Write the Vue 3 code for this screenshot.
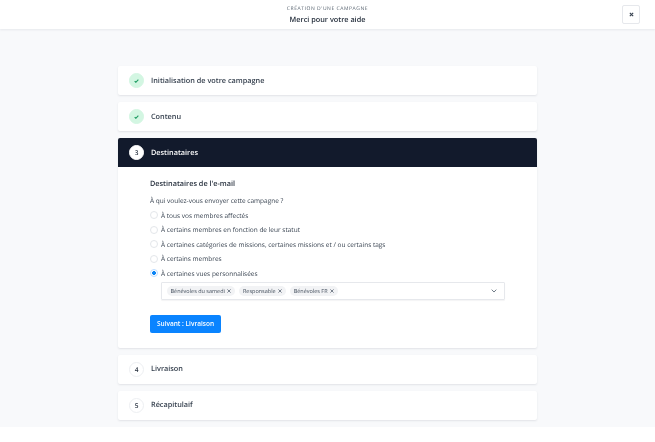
<script setup>
const options = [
  { label: 'À tous vos membres affectés', checked: false },
  { label: 'À certains membres en fonction de leur statut', checked: false },
  { label: 'À certaines catégories de missions, certaines missions et / ou certains tags', checked: false },
  { label: 'À certains membres', checked: false },
  { label: 'À certaines vues personnalisées', checked: true }
]

const tags = ['Bénévoles du samedi', 'Responsable', 'Bénévoles FR']
</script>

<template>
  <div class="page">
    <header class="topbar">
      <div class="topbar-sub">CRÉATION D'UNE CAMPAGNE</div>
      <div class="topbar-title">Merci pour votre aide</div>
      <button class="close-btn">
        <svg width="5" height="5" viewBox="0 0 6 6">
          <path d="M1 1l4 4M5 1L1 5" stroke="#3a4553" stroke-width="1.4" fill="none" />
        </svg>
      </button>
    </header>

    <main class="steps">
      <section class="card">
        <div class="card-head">
          <span class="bullet done">
            <svg width="5" height="4" viewBox="0 0 6 5">
              <path d="M0.7 2.6l1.5 1.5L5.3 0.9" stroke="#1f9d63" stroke-width="1.4" fill="none" />
            </svg>
          </span>
          <span class="card-title">Initialisation de votre campagne</span>
        </div>
      </section>

      <section class="card">
        <div class="card-head">
          <span class="bullet done">
            <svg width="5" height="4" viewBox="0 0 6 5">
              <path d="M0.7 2.6l1.5 1.5L5.3 0.9" stroke="#1f9d63" stroke-width="1.4" fill="none" />
            </svg>
          </span>
          <span class="card-title">Contenu</span>
        </div>
      </section>

      <section class="card">
        <div class="card-head active">
          <span class="bullet current">3</span>
          <span class="card-title">Destinataires</span>
        </div>
        <div class="card-body">
          <h2 class="body-title">Destinataires de l'e-mail</h2>
          <p class="question">À qui voulez-vous envoyer cette campagne ?</p>
          <div v-for="opt in options" :key="opt.label" class="radio-row">
            <span class="radio" :class="{ checked: opt.checked }"></span>
            <span>{{ opt.label }}</span>
          </div>
          <div class="select">
            <span v-for="tag in tags" :key="tag" class="tag">
              {{ tag }}
              <svg width="4" height="4" viewBox="0 0 5 5">
                <path d="M0.5 0.5l4 4M4.5 0.5l-4 4" stroke="#5a6573" stroke-width="1" fill="none" />
              </svg>
            </span>
            <svg class="chevron" width="6" height="4" viewBox="0 0 7 5">
              <path d="M0.6 0.8L3.5 3.8L6.4 0.8" stroke="#6b7683" stroke-width="1.2" fill="none" />
            </svg>
          </div>
          <button class="next-btn">Suivant : Livraison</button>
        </div>
      </section>

      <section class="card">
        <div class="card-head">
          <span class="bullet">4</span>
          <span class="card-title">Livraison</span>
        </div>
      </section>

      <section class="card">
        <div class="card-head">
          <span class="bullet">5</span>
          <span class="card-title">Récapitulaif</span>
        </div>
      </section>
    </main>
  </div>
</template>

<style>
html,
body {
  background: #fff;
}
</style>

<style scoped>
.page {
  font-family: "Open Sans", sans-serif;
  text-rendering: geometricPrecision;
  color: #333e4c;
  background: #f8f9fb;
  height: 427px;
  overflow: hidden;
  filter: blur(0.3px);
}

.topbar {
  position: relative;
  height: 29px;
  background: #fff;
  box-shadow: 0 1px 2px rgba(30, 40, 60, 0.08);
  text-align: center;
}

.topbar-sub {
  padding-top: 6px;
  font-size: 5px;
  line-height: 7px;
  letter-spacing: 0.55px;
  color: #505c69;
}

.topbar-title {
  margin-top: 1.5px;
  font-size: 7.3px;
  line-height: 11px;
  font-weight: 600;
  color: #1f2937;
}

.close-btn {
  position: absolute;
  top: 5px;
  right: 15px;
  width: 18px;
  height: 19px;
  padding: 0;
  display: flex;
  align-items: center;
  justify-content: center;
  background: #fff;
  border: 1px solid #e6e8ec;
  border-radius: 2px;
}

.steps {
  width: 419px;
  margin: 0 auto;
  padding-top: 37px;
  display: flex;
  flex-direction: column;
  gap: 7px;
}

.card {
  background: #fff;
  border-radius: 2px;
  box-shadow: 0 1px 2px rgba(30, 40, 60, 0.1);
}

.card-head {
  height: 29px;
  padding: 0 11px;
  display: flex;
  align-items: center;
  gap: 7px;
  border-radius: 2px;
}

.card-head.active {
  background: #121a2c;
  color: #fff;
  border-radius: 2px 2px 0 0;
}

.card-title {
  font-size: 7.3px;
  font-weight: 600;
}

.bullet {
  width: 15px;
  height: 15px;
  flex: none;
  display: flex;
  align-items: center;
  justify-content: center;
  border: 1px solid #edeff2;
  border-radius: 50%;
  box-sizing: border-box;
  font-size: 6.5px;
  font-weight: 600;
  color: #2b3543;
}

.bullet.done {
  background: #d3f6e2;
  border-color: #d3f6e2;
}

.bullet.current {
  background: #fff;
  border-color: #fff;
}

.card-body {
  padding: 12px 32px 15px;
}

.body-title {
  margin: 0;
  font-size: 7.3px;
  line-height: 11px;
  font-weight: 600;
  color: #1f2937;
}

.question {
  margin: 5px 0 0;
  font-size: 6.5px;
  line-height: 12px;
}

.radio-row {
  height: 14.5px;
  display: flex;
  align-items: center;
  gap: 3px;
  font-size: 6.5px;
}

.question + .radio-row {
  margin-top: 1px;
}

.radio {
  width: 8px;
  height: 8px;
  flex: none;
  box-sizing: border-box;
  border: 1px solid #e3e6ea;
  border-radius: 50%;
  background: #fff;
}

.radio.checked {
  border-color: #bcdcff;
  background: radial-gradient(circle, #0b84f5 0 1.6px, #fff 2.2px);
}

.select {
  position: relative;
  box-sizing: border-box;
  height: 18px;
  margin: 1px 0 0 11px;
  padding-left: 5px;
  display: flex;
  align-items: center;
  gap: 4.5px;
  border: 1px solid #e6e8ec;
  border-radius: 1px;
  box-shadow: 0 1px 1px rgba(30, 40, 60, 0.05);
}

.tag {
  height: 10px;
  padding: 0 3.5px;
  display: flex;
  align-items: center;
  gap: 2.5px;
  background: #f2f3f5;
  border-radius: 5px;
  font-size: 5.5px;
  color: #434e5c;
}

.chevron {
  position: absolute;
  right: 7px;
  top: 6px;
}

.next-btn {
  display: block;
  width: 71px;
  height: 18px;
  margin-top: 15px;
  padding: 0;
  background: #0a84ff;
  border: none;
  border-radius: 2px;
  color: #fff;
  font-family: inherit;
  font-size: 6.5px;
  font-weight: 600;
}
</style>
